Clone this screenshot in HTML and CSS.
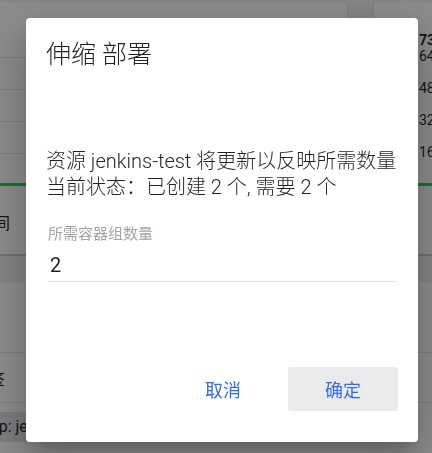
FILE: index.html
```html
<!DOCTYPE html>
<html lang="zh-CN">
<head>
<meta charset="utf-8">
<title>伸缩 部署</title>
<link rel="stylesheet" href="styles.css">
</head>
<body>
<div class="page">
  <div class="topbar"><div class="tab"></div></div>
  <div class="chart">
    <div class="grid">
      <div class="gridrow"></div>
      <div class="gridrow"></div>
      <div class="gridrow"></div>
      <div class="gridrow"></div>
    </div>
    <div class="axis">
      <div class="max">73</div>
      <div class="tick">64</div>
      <div class="tick">48</div>
      <div class="tick">32</div>
      <div class="tick">16</div>
    </div>
  </div>
  <div class="green"></div>
  <div class="thead"><span class="cut">时间</span></div>
  <div class="band"></div>
  <div class="trow"></div>
  <div class="trow short"><span class="cut deep">标签</span></div>
  <div class="chiprow"><span class="chip">app: jenkins-test</span></div>
</div>

<div class="overlay">
  <div class="dialog" role="dialog">
    <h2 class="title">伸缩 部署</h2>
    <p class="msg">资源 jenkins-test 将更新以反映所需数量<br>当前状态：已创建 2 个, 需要 2 个</p>
    <div class="field">
      <div class="label">所需容器组数量</div>
      <div class="input">2</div>
    </div>
    <div class="actions">
      <button class="btn">取消</button>
      <button class="btn primary">确定</button>
    </div>
  </div>
</div>
</body>
</html>
```

FILE: styles.css
```css
html, body {
  margin: 0;
  padding: 0;
}
body {
  font-family: Roboto, "Noto Sans CJK SC", sans-serif;
  color: rgba(0, 0, 0, 0.87);
  overflow: hidden;
}
.page {
  width: 432px;
  height: 453px;
  background: #ffffff;
  overflow: hidden;
}
.topbar {
  height: 18px;
  box-sizing: border-box;
  border-top: 3px solid #f4f4f4;
  display: flex;
}
.tab {
  margin-left: 347px;
  width: 25px;
  height: 15px;
  background: #f0f0f0;
  border-left: 1px solid #e6e6e6;
  border-right: 1px solid #e6e6e6;
}
.chart {
  display: flex;
  height: 165px;
}
.grid {
  flex: 1;
  padding-top: 39px;
}
.gridrow {
  height: 32px;
  box-sizing: border-box;
  border-top: 1px solid #e4e4e4;
}
.axis {
  width: 13px;
  padding-top: 14px;
  font-size: 14px;
  line-height: 16px;
  overflow: hidden;
  white-space: nowrap;
}
.max {
  font-weight: 700;
}
.tick {
  height: 32px;
}
.green {
  height: 3px;
  background: #35c85e;
}
.thead {
  height: 70px;
  box-sizing: border-box;
  border-bottom: 2px solid #cfcfcf;
  display: flex;
  align-items: center;
  padding-top: 4px;
  font-size: 16px;
  overflow: hidden;
}
.cut {
  margin-left: -22px;
  white-space: nowrap;
}
.cut.deep {
  margin-left: -27px;
}
.band {
  height: 26px;
  background: #f1f1f1;
}
.trow {
  height: 71px;
  box-sizing: border-box;
  border-bottom: 1px solid #e4e4e4;
  display: flex;
  align-items: center;
  font-size: 16px;
  overflow: hidden;
}
.trow.short {
  height: 50px;
}
.chiprow {
  padding-top: 9px;
  display: flex;
}
.chip {
  margin-left: -31px;
  padding: 0 12px;
  height: 30px;
  line-height: 30px;
  background: #e2e2e2;
  font-size: 16px;
  white-space: nowrap;
}

.overlay {
  position: fixed;
  inset: 0;
  background: rgba(0, 0, 0, 0.45);
  display: flex;
  align-items: flex-start;
  padding: 18px 0 0 26px;
}
.dialog {
  width: 392px;
  box-sizing: border-box;
  background: #ffffff;
  border-radius: 4px;
  padding: 21px 20px 31px 20px;
  box-shadow: 0 11px 15px -7px rgba(0, 0, 0, 0.2),
              0 24px 38px 3px rgba(0, 0, 0, 0.14),
              0 9px 46px 8px rgba(0, 0, 0, 0.12);
}
.title {
  margin: 0;
  font-size: 25px;
  line-height: 32px;
  font-weight: 300;
  color: rgba(0, 0, 0, 0.87);
}
.msg {
  margin: 77px 0 0;
  font-size: 20px;
  line-height: 26px;
  font-weight: 300;
  white-space: nowrap;
}
.field {
  margin: 24px 2px 0;
}
.label {
  font-size: 15px;
  line-height: 20px;
  color: #a3a3a3;
}
.input {
  margin-top: 7px;
  font-size: 20px;
  line-height: 28px;
  padding: 0 0 2px 2px;
  border-bottom: 1px solid #e0e0e0;
}
.actions {
  margin-top: 85px;
  display: flex;
  justify-content: flex-end;
  gap: 10px;
}
.btn {
  width: 110px;
  height: 44px;
  border: none;
  border-radius: 3px;
  background: transparent;
  color: #326de6;
  font-family: Roboto, "Noto Sans CJK SC", sans-serif;
  font-size: 18px;
  padding: 0;
}
.btn.primary {
  background: #ebebeb;
}
```
